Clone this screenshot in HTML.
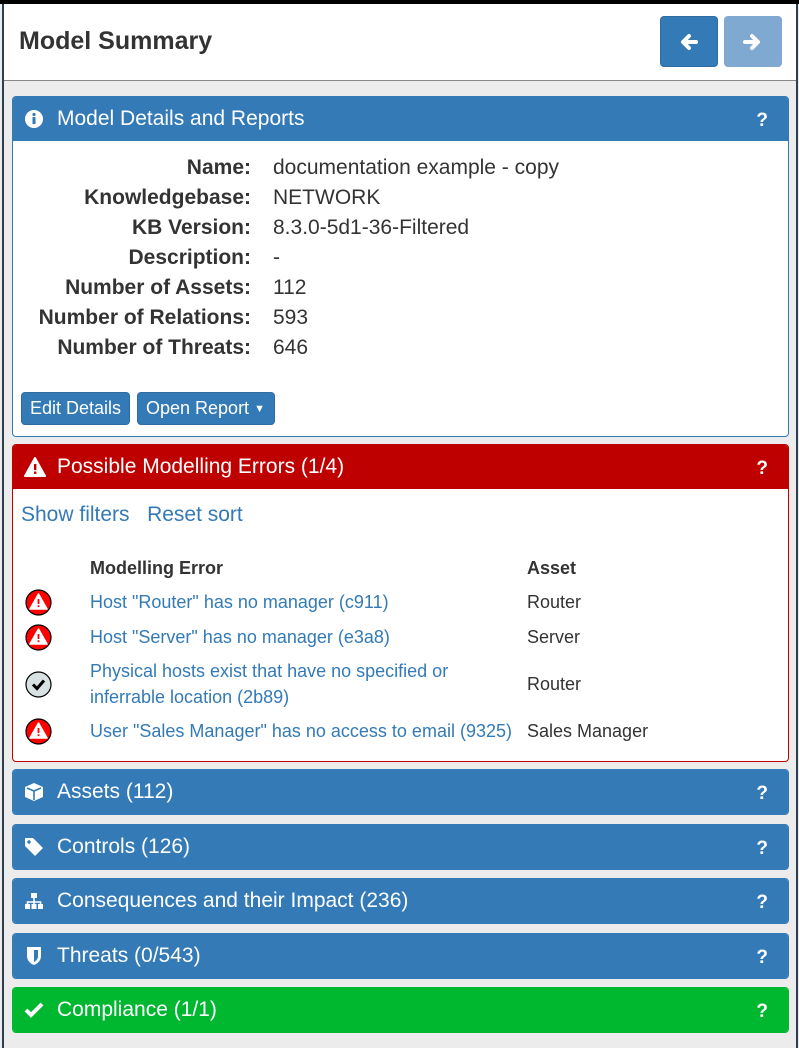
<!DOCTYPE html>
<html><head><meta charset="utf-8"><style>
*{box-sizing:border-box;margin:0;padding:0}
body{width:799px;height:1048px;overflow:hidden;background:#ececec;font-family:"Liberation Sans",Arial,sans-serif;color:#333;position:relative}
.abs{position:absolute}
.top{left:0;top:0;width:799px;height:4px;background:#000}
.lb{left:2px;top:4px;width:2px;height:1044px;background:#2c3e50}
.rb{left:796px;top:4px;width:2px;height:1044px;background:#2c3e50}
.hdr{left:4px;top:4px;width:792px;height:77px;background:#fff;border-bottom:1px solid #888}
.hdr h1{position:absolute;left:15px;top:23px;font-size:25px;font-weight:bold;color:#333}
.nb{position:absolute;top:12px;width:58px;height:51px;border-radius:4px;background:#337ab7;border:1px solid #2e6da4}
.panel{position:absolute;left:12px;width:777px;border:1px solid #337ab7;border-radius:4px;background:#fff;overflow:hidden}
.ph{height:44px;background:#337ab7;color:#fff;font-size:21px;position:relative}
.ph span.t{position:absolute;left:44px;top:10px;white-space:nowrap}
.ph .q{position:absolute;right:20px;top:13px;font-weight:bold;font-size:19px}
.ph svg{position:absolute;left:11px;top:12px}
.cp{height:46px;border-radius:4px}
.lbl{position:absolute;width:251px;text-align:right;font-weight:bold;font-size:21px;left:0;white-space:nowrap}
.val{position:absolute;left:273px;font-size:21px;white-space:nowrap}
a{color:#337ab7;text-decoration:none}
.btn{position:absolute;top:392px;height:33px;background:#337ab7;border-radius:4px;color:#fff;font-size:18px;padding:5px 0 0 8px;border:1px solid #2e6da4;white-space:nowrap}
.tr{position:absolute;font-size:18px;white-space:nowrap}
.ic{position:absolute;left:25px;width:27px;height:27px}
</style></head><body>
<div class="abs top"></div>
<div class="abs hdr"><h1>Model Summary</h1>
<div class="nb" style="left:656px"><svg width="58" height="51"><path d="M35 25H23M28 19l-6 6 6 6" stroke="#fff" stroke-width="4" fill="none" stroke-linecap="round" stroke-linejoin="round"/></svg></div>
<div class="nb" style="left:720px;background:#7fa9d1;border-color:#7fa9d1"><svg width="58" height="51"><path d="M20 25h12M27 19l6 6-6 6" stroke="#fff" stroke-width="4" fill="none" stroke-linecap="round" stroke-linejoin="round"/></svg></div>
</div>
<div class="abs lb"></div><div class="abs rb"></div>

<div class="panel" style="top:96px;height:341px">
<div class="ph"><svg width="20" height="20"><circle cx="10" cy="10" r="9" fill="#fff"/><rect x="8.5" y="8" width="3" height="7" fill="#337ab7"/><circle cx="10" cy="5.5" r="1.6" fill="#337ab7"/></svg><span class="t">Model Details and Reports</span><span class="q">?</span></div>
</div>
<div class="lbl" style="top:156px">Name:</div><div class="val" style="top:156px">documentation example - copy</div>
<div class="lbl" style="top:186px">Knowledgebase:</div><div class="val" style="top:186px">NETWORK</div>
<div class="lbl" style="top:216px">KB Version:</div><div class="val" style="top:216px">8.3.0-5d1-36-Filtered</div>
<div class="lbl" style="top:246px">Description:</div><div class="val" style="top:246px">-</div>
<div class="lbl" style="top:276px">Number of Assets:</div><div class="val" style="top:276px">112</div>
<div class="lbl" style="top:306px">Number of Relations:</div><div class="val" style="top:306px">593</div>
<div class="lbl" style="top:336px">Number of Threats:</div><div class="val" style="top:336px">646</div>
<div class="btn" style="left:21px;width:109px">Edit Details</div>
<div class="btn" style="left:137px;width:138px">Open Report <span style="font-size:11px;vertical-align:2px">▼</span></div>

<div class="panel" style="top:444px;height:318px;border-color:#bf0000">
<div class="ph" style="background:#bf0000"><svg width="22" height="20"><path d="M11 1L21 19H1Z" fill="#fff" stroke="#fff" stroke-linejoin="round" stroke-width="2"/><rect x="10" y="7" width="2.4" height="6" fill="#bf0000"/><rect x="10" y="14.5" width="2.4" height="2.4" fill="#bf0000"/></svg><span class="t">Possible Modelling Errors (1/4)</span><span class="q">?</span></div>
</div>
<div class="abs" style="left:21px;top:503px;font-size:21px;white-space:nowrap"><a>Show filters</a>&nbsp;&nbsp; <a>Reset sort</a></div>
<div class="tr" style="left:90px;top:558px;font-weight:bold">Modelling Error</div>
<div class="tr" style="left:527px;top:558px;font-weight:bold">Asset</div>
<svg class="ic" style="top:589px"><circle cx="13.5" cy="13.5" r="12.5" fill="#f00" stroke="#000" stroke-width="1.2"/><path d="M13.5 5L22 20H5Z" fill="#fff" stroke="#fff" stroke-linejoin="round" stroke-width="1.5"/><rect x="12.6" y="10" width="1.8" height="5" fill="#f00"/><rect x="12.6" y="16.3" width="1.8" height="1.8" fill="#f00"/></svg>
<div class="tr" style="left:90px;top:592px"><a>Host "Router" has no manager (c911)</a></div><div class="tr" style="left:527px;top:592px">Router</div>
<svg class="ic" style="top:624px"><circle cx="13.5" cy="13.5" r="12.5" fill="#f00" stroke="#000" stroke-width="1.2"/><path d="M13.5 5L22 20H5Z" fill="#fff" stroke="#fff" stroke-linejoin="round" stroke-width="1.5"/><rect x="12.6" y="10" width="1.8" height="5" fill="#f00"/><rect x="12.6" y="16.3" width="1.8" height="1.8" fill="#f00"/></svg>
<div class="tr" style="left:90px;top:627px"><a>Host "Server" has no manager (e3a8)</a></div><div class="tr" style="left:527px;top:627px">Server</div>
<svg class="ic" style="top:671px"><circle cx="13.5" cy="13.5" r="12.5" fill="#d9e2e2" stroke="#000" stroke-width="1.2"/><path d="M8 13.5l4 4 7-8" stroke="#000" stroke-width="3" fill="none"/></svg>
<div class="tr" style="left:90px;top:658px;line-height:26px"><a>Physical hosts exist that have no specified or<br>inferrable location (2b89)</a></div><div class="tr" style="left:527px;top:674px">Router</div>
<svg class="ic" style="top:718px"><circle cx="13.5" cy="13.5" r="12.5" fill="#f00" stroke="#000" stroke-width="1.2"/><path d="M13.5 5L22 20H5Z" fill="#fff" stroke="#fff" stroke-linejoin="round" stroke-width="1.5"/><rect x="12.6" y="10" width="1.8" height="5" fill="#f00"/><rect x="12.6" y="16.3" width="1.8" height="1.8" fill="#f00"/></svg>
<div class="tr" style="left:90px;top:721px"><a>User "Sales Manager" has no access to email (9325)</a></div><div class="tr" style="left:527px;top:721px">Sales Manager</div>

<div class="panel cp" style="top:769px"><div class="ph"><svg width="20" height="20"><path d="M10 1L19 5v10l-9 4-9-4V5Z" fill="#fff"/><path d="M3 6l7 3 7-3M10 9v9" stroke="#337ab7" stroke-width="1.6" fill="none"/></svg><span class="t">Assets (112)</span><span class="q">?</span></div></div>
<div class="panel cp" style="top:824px"><div class="ph"><svg width="20" height="20"><path d="M1 1h8l10 10-8 8L1 9Z" fill="#fff"/><circle cx="5" cy="5" r="1.7" fill="#337ab7"/></svg><span class="t">Controls (126)</span><span class="q">?</span></div></div>
<div class="panel cp" style="top:878px"><div class="ph"><svg width="20" height="20"><rect x="7" y="2" width="6" height="5" fill="#fff"/><path d="M10 7v4M3.5 14v-3h13v3M10 11v3" stroke="#fff" stroke-width="1.6" fill="none"/><rect x="1" y="13" width="5" height="5" fill="#fff"/><rect x="7.5" y="13" width="5" height="5" fill="#fff"/><rect x="14" y="13" width="5" height="5" fill="#fff"/></svg><span class="t">Consequences and their Impact (236)</span><span class="q">?</span></div></div>
<div class="panel cp" style="top:933px"><div class="ph"><svg width="20" height="20"><path d="M3 1h14v9c0 5-4 8-7 9-3-1-7-4-7-9Z" fill="#fff"/><path d="M10 4h4v6c0 3-2 5-4 6Z" fill="#337ab7"/></svg><span class="t">Threats (0/543)</span><span class="q">?</span></div></div>
<div class="panel cp" style="top:987px;border-color:#00b830"><div class="ph" style="background:#00b830"><svg width="20" height="20"><path d="M2 10l5 5 11-11" stroke="#fff" stroke-width="4" fill="none"/></svg><span class="t">Compliance (1/1)</span><span class="q">?</span></div></div>
</body></html>
